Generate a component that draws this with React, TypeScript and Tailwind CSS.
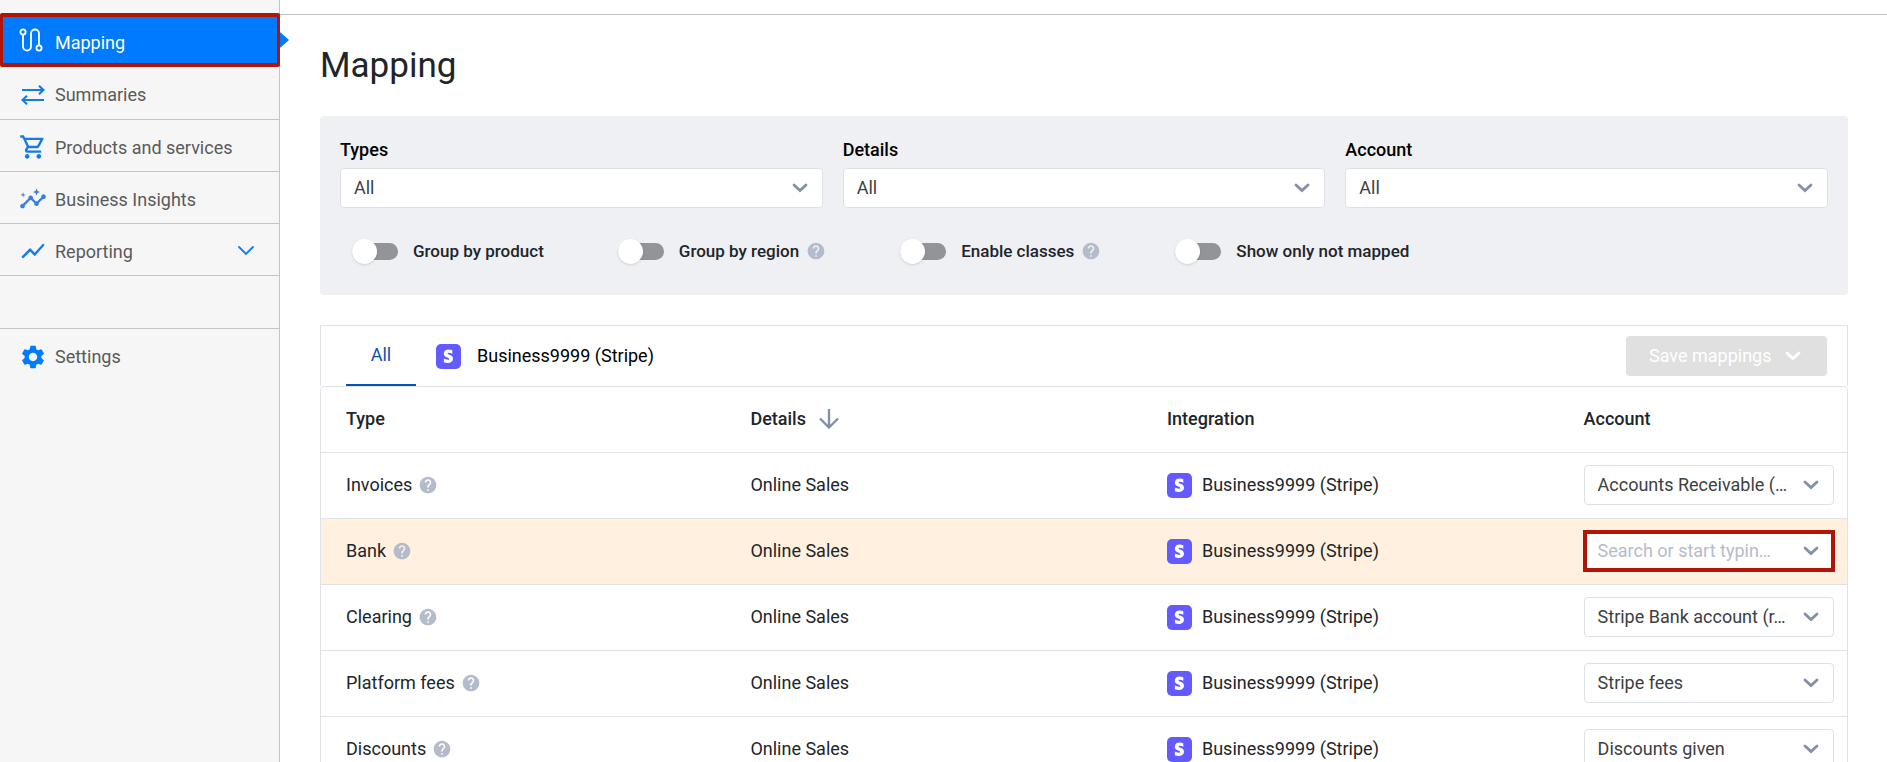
import React, { useState } from "react";
import { MdHelp, MdInsights, MdOutlineShoppingCart, MdSettings, MdShowChart } from "react-icons/md";

interface Row {
  type: string;
  details: string;
  account: string;
}

const rows: Row[] = [
  { type: "Invoices", details: "Online Sales", account: "Accounts Receivable (…" },
  { type: "Bank", details: "Online Sales", account: "" },
  { type: "Clearing", details: "Online Sales", account: "Stripe Bank account (r…" },
  { type: "Platform fees", details: "Online Sales", account: "Stripe fees" },
  { type: "Discounts", details: "Online Sales", account: "Discounts given" },
];

const filters = ["Types", "Details", "Account"];

const toggles = [
  { label: "Group by product", help: false },
  { label: "Group by region", help: true },
  { label: "Enable classes", help: true },
  { label: "Show only not mapped", help: false },
];

const MappingIcon = () => (
  <svg viewBox="0 0 24 24" className="w-6 h-6" fill="none" stroke="currentColor" strokeWidth="1.8">
    <circle cx="4" cy="4" r="2.6" />
    <circle cx="20" cy="20" r="2.6" />
    <path d="M4 6.600V18.500a4 4 0 0 0 8 0V5.500a4 4 0 0 1 8 0v11.900" />
  </svg>
);

const SummariesIcon = () => (
  <svg viewBox="0 0 24 20" className="w-6 h-5 ml-[2px]" fill="none" stroke="currentColor" strokeWidth="2.2">
    <path d="M1 5h21M18 .8L22.500 5 18 9.200M23 15H2M6 10.800L1.500 15 6 19.200" />
  </svg>
);

const Chevron = ({ className = "", thin = false }: { className?: string; thin?: boolean }) => (
  <svg
    viewBox="0 0 16 10"
    className={`w-4 h-[10px] pointer-events-none ${className}`}
    fill="none"
    stroke="currentColor"
    strokeWidth={thin ? 1.8 : 2.8}
    strokeLinecap="round"
  >
    <path d={thin ? "M1 1l7 7 7-7" : "M2 2l6 5.500 6-5.500"} />
  </svg>
);

const StripeLogo = () => (
  <svg viewBox="0 0 25 25" className="w-[25px] h-[25px] shrink-0">
    <rect width="25" height="25" rx="5" fill="#635bff" />
    <path
      fill="#fff"
      d="M11.500 9.600c0-.6.500-.8 1.200-.8 1.100 0 2.500.3 3.600.9V6.200a9.500 9.500 0 0 0-3.600-.7c-2.900 0-4.900 1.600-4.900 4.200 0 4.100 5.500 3.400 5.500 5.200 0 .7-.6.900-1.400.9-1.200 0-2.800-.5-4-1.200v3.600c1.300.6 2.700.8 4 .8 3 0 5.100-1.500 5.100-4.200 0-4.400-5.500-3.600-5.500-5.200z"
    />
  </svg>
);

const Help = () => <MdHelp className="w-5 h-5 text-[#b4bccc] shrink-0" />;

const navItems = [
  { label: "Products and services", icon: <MdOutlineShoppingCart className="w-7 h-7" /> },
  { label: "Business Insights", icon: <MdInsights className="w-7 h-7 text-[#3b7de0]" /> },
  { label: "Reporting", icon: <MdShowChart className="w-7 h-7" />, expandable: true },
];

const Sidebar = () => (
  <nav className="w-[280px] shrink-0 bg-[#f6f6f6] border-r border-[#c4c4c8] pt-[13px] text-[#5a5a5a]">
    <a
      href="#mapping"
      className="relative flex items-center -mr-px h-[54px] pl-4 bg-[#007bff] border-[#b01507] border-4 border-x-[3px] rounded-xs text-white"
    >
      <span className="w-9 flex"><MappingIcon /></span>
      <span className="pt-[6px]">Mapping</span>
      <span className="absolute left-full top-[15px] ml-[3px] border-y-8 border-y-transparent border-l-[9px] border-l-[#007bff]" />
    </a>
    <a href="#summaries" className="flex items-center h-[53px] pt-1 pl-[19px] border-b border-[#c4c4c8]">
      <span className="w-9 flex text-[#157bea]"><SummariesIcon /></span>
      Summaries
    </a>
    {navItems.map((item) => (
      <a
        key={item.label}
        href="#"
        className="flex items-center h-[52px] pt-[2px] pl-[19px] pr-[25px] border-b border-[#c4c4c8]"
      >
        <span className="w-9 flex text-[#157bea]">{item.icon}</span>
        <span className="flex-1 pt-[2px]">{item.label}</span>
        {item.expandable && <Chevron thin className="text-[#157bea]" />}
      </a>
    ))}
    <div className="h-[53px] border-b border-[#c4c4c8]" />
    <a href="#settings" className="flex items-center h-14 pl-[19px]">
      <span className="w-9 flex text-[#007bff]"><MdSettings className="w-7 h-7" /></span>
      Settings
    </a>
  </nav>
);

const Toggle = ({ label, help }: { label: string; help: boolean }) => {
  const [on, setOn] = useState(false);

  return (
    <div className="flex items-center">
      <label className="flex items-center cursor-pointer font-medium text-[17px]">
        <input type="checkbox" className="sr-only" checked={on} onChange={() => setOn(!on)} />
        <span className={`w-[46px] h-[17px] rounded-full flex items-center mr-[15px] ${on ? "bg-[#007bff] justify-end" : "bg-[#939498]"}`}>
          <span className="w-[25px] h-[25px] rounded-full bg-white shadow-sm shrink-0" />
        </span>
        {label}
      </label>
      {help && <span className="ml-[7px]"><Help /></span>}
    </div>
  );
};

const App: React.FC = () => {
  return (
    <div className="flex h-screen overflow-hidden bg-white font-[Roboto,sans-serif] text-lg text-[#212529]">
      <Sidebar />
      <main className="flex-1 min-w-0 pt-[14px]">
        <div className="border-t border-[#c4c4c8] pl-10 pr-[39px] pt-[29px]">
          <h1 className="text-[35px] leading-[44px]">Mapping</h1>

          <section className="mt-7 bg-[#eff0f4] rounded-sm px-5 pt-5 pb-[30px]">
            <div className="grid grid-cols-3 gap-5">
              {filters.map((name) => (
                <label key={name} className="block font-medium text-black">
                  <span className="block leading-7 mb-1">{name}</span>
                  <span className="relative block">
                    <select className="appearance-none block w-full h-10 pl-[13px] pr-10 bg-white border border-[#dee2e6] rounded-sm font-normal text-[#3c4043]">
                      <option>All</option>
                    </select>
                    <Chevron className="absolute right-[15px] top-[15px] text-[#8490a8]" />
                  </span>
                </label>
              ))}
            </div>
            <div className="flex items-center h-7 gap-[74px] pl-3 mt-[29px]">
              {toggles.map((toggle) => (
                <Toggle key={toggle.label} {...toggle} />
              ))}
            </div>
          </section>

          <section className="mt-[30px]">
            <div className="flex items-center h-[61px] border border-b-0 border-[#dfe2e6] pl-[25px] pr-5">
              <button className="self-stretch w-[70px] border-b-2 border-[#0d4fb5] text-[#0d4fb5]">All</button>
              <button className="flex items-center gap-4 ml-5 text-black">
                <StripeLogo />
                Business9999 (Stripe)
              </button>
              <button disabled className="ml-auto flex items-center gap-[14px] h-10 w-[201px] pl-[23px] rounded-sm bg-[#e0e0e0] text-white">
                Save mappings
                <Chevron />
              </button>
            </div>
            <div className="border border-[#dfe2e6] rounded-t-sm">
              <table className="w-full table-fixed text-left">
                <colgroup>
                  <col className="w-[26.5%]" />
                  <col className="w-[27.3%]" />
                  <col className="w-[27.3%]" />
                  <col />
                </colgroup>
                <thead>
                  <tr className="h-[65px] border-b border-[#dfe2e6]">
                    <th className="pl-[25px] font-medium">Type</th>
                    <th className="pl-[25px] font-medium">
                      <button className="flex items-center gap-[13px]">
                        Details
                        <svg viewBox="0 0 20 20" className="w-5 h-5 text-[#8490a8]" fill="none" stroke="currentColor" strokeWidth="2.4">
                          <path d="M10 0v18.500M1 9.500l9 9 9-9" />
                        </svg>
                      </button>
                    </th>
                    <th className="pl-[25px] font-medium">Integration</th>
                    <th className="pl-[25px] font-medium">Account</th>
                  </tr>
                </thead>
                <tbody>
                  {rows.map((row) => (
                    <tr key={row.type} className={`h-[66px] border-b border-[#dfe2e6] ${row.account ? "" : "bg-[#fff0df]"}`}>
                      <td className="pl-[25px]">
                        <span className="flex items-center gap-[6px]">
                          {row.type}
                          <Help />
                        </span>
                      </td>
                      <td className="pl-[25px]">{row.details}</td>
                      <td className="pl-[25px]">
                        <span className="flex items-center gap-[10px]">
                          <StripeLogo />
                          Business9999 (Stripe)
                        </span>
                      </td>
                      <td className="pl-[25px] pr-[13px]">
                        <span className="relative block">
                          <select
                            aria-label={`Account for ${row.type}`}
                            className={`appearance-none block w-full h-10 pl-[13px] pr-10 bg-white ${
                              row.account
                                ? "border border-[#dee2e6] rounded-sm text-[#3c4043]"
                                : "border border-transparent outline-4 outline-offset-[-3px] outline-[#b01507] text-[#b4bccc]"
                            }`}
                          >
                            <option>{row.account || "Search or start typin…"}</option>
                          </select>
                          <Chevron className="absolute right-[15px] top-[15px] text-[#8490a8]" />
                        </span>
                      </td>
                    </tr>
                  ))}
                </tbody>
              </table>
            </div>
          </section>
        </div>
      </main>
    </div>
  );
};

export default App;
